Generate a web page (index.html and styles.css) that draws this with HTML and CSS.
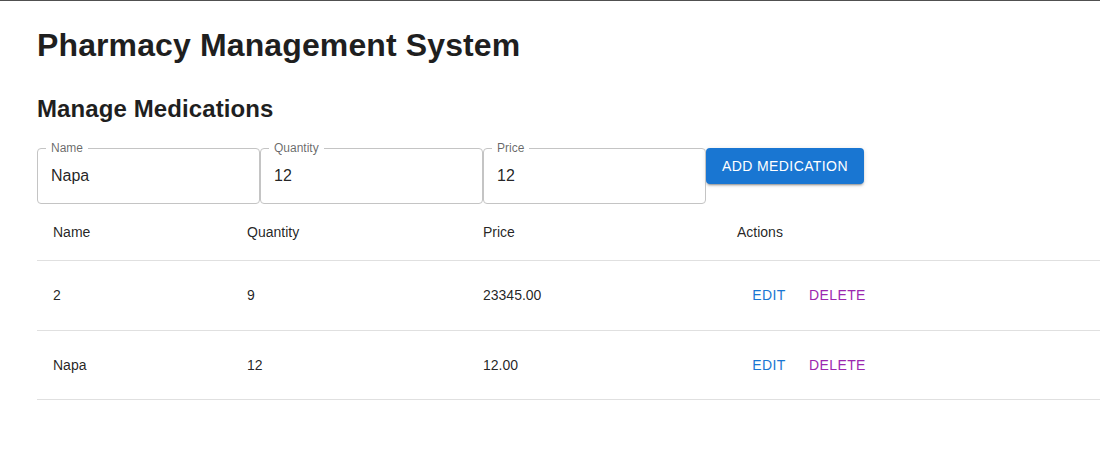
FILE: index.html
```html
<!DOCTYPE html>
<html lang="en">
<head>
<meta charset="utf-8">
<title>Pharmacy Management System</title>
<link rel="stylesheet" href="styles.css">
</head>
<body>
<div class="topline"></div>
<main class="page">
  <h1 class="title">Pharmacy Management System</h1>
  <h2 class="subtitle">Manage Medications</h2>
  <form class="form">
    <div class="field">
      <span class="field-label">Name</span>
      <input class="field-input" type="text" value="Napa">
    </div>
    <div class="field">
      <span class="field-label">Quantity</span>
      <input class="field-input" type="text" value="12">
    </div>
    <div class="field">
      <span class="field-label">Price</span>
      <input class="field-input" type="text" value="12">
    </div>
    <button class="btn-contained" type="button">Add Medication</button>
  </form>
  <table class="table">
    <colgroup>
      <col class="c1"><col class="c2"><col class="c3"><col class="c4">
    </colgroup>
    <thead>
      <tr><th>Name</th><th>Quantity</th><th>Price</th><th>Actions</th></tr>
    </thead>
    <tbody>
      <tr>
        <td>2</td><td>9</td><td>23345.00</td>
        <td><button class="btn-text edit" type="button">Edit</button><button class="btn-text delete" type="button">Delete</button></td>
      </tr>
      <tr>
        <td>Napa</td><td>12</td><td>12.00</td>
        <td><button class="btn-text edit" type="button">Edit</button><button class="btn-text delete" type="button">Delete</button></td>
      </tr>
    </tbody>
  </table>
</main>
</body>
</html>
```

FILE: styles.css
```css
* { box-sizing: border-box; }
html, body { margin: 0; padding: 0; background: #fff; overflow: hidden; }
body {
  font-family: "Liberation Sans", Arial, Helvetica, sans-serif;
  color: rgba(0,0,0,0.87);
  width: 1100px;
  height: 467px;
}
.topline { height: 1px; background: #505050; }
.page { padding: 24px 0 0 37px; }
.title {
  margin: 0;
  font-size: 32px;
  line-height: 40px;
  font-weight: 700;
  letter-spacing: 0.12px;
  color: #1f1f1f;
}
.subtitle {
  margin: 28px 0 0;
  font-size: 24px;
  line-height: 32px;
  font-weight: 700;
  letter-spacing: 0.1px;
  color: #1f1f1f;
}
.form {
  display: flex;
  align-items: flex-start;
  margin-top: 23px;
}
.field {
  position: relative;
  width: 223px;
  height: 56px;
  border: 1px solid #c4c4c4;
  border-radius: 4px;
}
.field-label {
  position: absolute;
  left: 8px;
  top: -8px;
  padding: 0 5px;
  background: #fff;
  font-size: 12px;
  line-height: 14px;
  color: rgba(0,0,0,0.6);
}
.field-input {
  display: block;
  width: 100%;
  height: 100%;
  border: 0;
  outline: 0;
  background: transparent;
  padding: 0 13px;
  font-family: inherit;
  font-size: 16px;
  color: rgba(0,0,0,0.87);
}
.btn-contained {
  height: 36px;
  padding: 0 16px;
  border: 0;
  border-radius: 4px;
  background: #1976d2;
  color: #fff;
  font-family: inherit;
  font-size: 14px;
  letter-spacing: 0.4px;
  text-transform: uppercase;
  box-shadow: 0 3px 1px -2px rgba(0,0,0,0.2), 0 2px 2px 0 rgba(0,0,0,0.14), 0 1px 5px 0 rgba(0,0,0,0.12);
}
.table {
  width: 1100px;
  border-collapse: collapse;
  table-layout: fixed;
  font-size: 14px;
}
.c1 { width: 194px; }
.c2 { width: 236px; }
.c3 { width: 254px; }
.table th, .table td {
  text-align: left;
  padding: 16px;
  border-bottom: 1px solid #e0e0e0;
  color: rgba(0,0,0,0.87);
}
.table th { font-weight: 400; line-height: 24px; }
.table td { line-height: 20px; }
.btn-text {
  min-width: 64px;
  height: 36.5px;
  padding: 0 8px;
  border: 0;
  background: transparent;
  font-family: inherit;
  font-size: 14px;
  letter-spacing: 0.4px;
  text-transform: uppercase;
  vertical-align: middle;
}
.edit { color: #1976d2; }
.delete { color: #9c27b0; }
```
